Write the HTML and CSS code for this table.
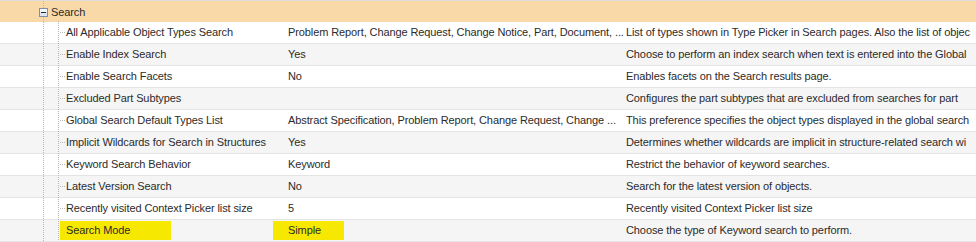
FILE: index.html
```html
<!DOCTYPE html>
<html lang="en">
<head>
    <meta charset="UTF-8">
    <title>Preferences - Search</title>
    <link rel="stylesheet" href="styles.css">
</head>
<body>
    <div class="pref-table">
        <!-- Group header -->
        <div class="group-row">
            <span class="toggle">
                <svg width="9" height="9" viewBox="0 0 9 9">
                    <rect x="0.5" y="0.5" width="8" height="8" fill="#dfe5ee" stroke="#7f8ea8"/>
                    <rect x="1" y="1" width="7" height="3" fill="#f4f6fa"/>
                    <path d="M2 4.5h5" stroke="#1f2a3a" stroke-width="1"/>
                </svg>
            </span>
            <span class="group-name">Search</span>
        </div>

        <div class="pref-row">
            <div class="tree"><span class="guide"></span><span class="guide last"></span></div>
            <div class="cell name"><span class="elbow"></span>All Applicable Object Types Search</div>
            <div class="cell value">Problem Report, Change Request, Change Notice, Part, Document, ...</div>
            <div class="cell desc">List of types shown in Type Picker in Search pages. Also the list of objec</div>
        </div>
        <div class="pref-row">
            <div class="tree"><span class="guide"></span><span class="guide last"></span></div>
            <div class="cell name"><span class="elbow"></span>Enable Index Search</div>
            <div class="cell value">Yes</div>
            <div class="cell desc">Choose to perform an index search when text is entered into the Global</div>
        </div>
        <div class="pref-row">
            <div class="tree"><span class="guide"></span><span class="guide last"></span></div>
            <div class="cell name"><span class="elbow"></span>Enable Search Facets</div>
            <div class="cell value">No</div>
            <div class="cell desc">Enables facets on the Search results page.</div>
        </div>
        <div class="pref-row">
            <div class="tree"><span class="guide"></span><span class="guide last"></span></div>
            <div class="cell name"><span class="elbow"></span>Excluded Part Subtypes</div>
            <div class="cell value"></div>
            <div class="cell desc">Configures the part subtypes that are excluded from searches for part</div>
        </div>
        <div class="pref-row">
            <div class="tree"><span class="guide"></span><span class="guide last"></span></div>
            <div class="cell name"><span class="elbow"></span>Global Search Default Types List</div>
            <div class="cell value">Abstract Specification, Problem Report, Change Request, Change ...</div>
            <div class="cell desc">This preference specifies the object types displayed in the global search</div>
        </div>
        <div class="pref-row">
            <div class="tree"><span class="guide"></span><span class="guide last"></span></div>
            <div class="cell name"><span class="elbow"></span>Implicit Wildcards for Search in Structures</div>
            <div class="cell value">Yes</div>
            <div class="cell desc">Determines whether wildcards are implicit in structure-related search wi</div>
        </div>
        <div class="pref-row">
            <div class="tree"><span class="guide"></span><span class="guide last"></span></div>
            <div class="cell name"><span class="elbow"></span>Keyword Search Behavior</div>
            <div class="cell value">Keyword</div>
            <div class="cell desc">Restrict the behavior of keyword searches.</div>
        </div>
        <div class="pref-row">
            <div class="tree"><span class="guide"></span><span class="guide last"></span></div>
            <div class="cell name"><span class="elbow"></span>Latest Version Search</div>
            <div class="cell value">No</div>
            <div class="cell desc">Search for the latest version of objects.</div>
        </div>
        <div class="pref-row">
            <div class="tree"><span class="guide"></span><span class="guide last"></span></div>
            <div class="cell name"><span class="elbow"></span>Recently visited Context Picker list size</div>
            <div class="cell value">5</div>
            <div class="cell desc">Recently visited Context Picker list size</div>
        </div>
        <div class="pref-row">
            <div class="tree"><span class="guide"></span><span class="guide last"></span></div>
            <div class="cell name"><span class="hl hl-name">Search Mode</span></div>
            <div class="cell value"><span class="hl hl-value">Simple</span></div>
            <div class="cell desc">Choose the type of Keyword search to perform.</div>
        </div>
    </div>
</body>
</html>
```

FILE: styles.css
```css
body {
    margin: 0;
    font-family: 'Liberation Sans', Arial, sans-serif;
    font-size: 11px;
    letter-spacing: -0.1px;
    color: #2b2b2b;
    background: #ffffff;
    overflow: hidden;
}
.pref-table {
    width: 976px;
}
.group-row {
    height: 21px;
    border-top: 1px solid #dedede;
    background: #f9d9a7;
    display: flex;
    align-items: center;
    padding-left: 39px;
    gap: 3px;
    background-image: linear-gradient(#c4b9a6 50%, transparent 50%);
    background-size: 1px 2px;
    background-position: 43px 0;
    background-repeat: repeat-y;
}
.toggle {
    display: flex;
    width: 9px;
    height: 9px;
    margin-top: 1px;
}
.pref-row {
    display: grid;
    grid-template-columns: 60px 213px 338px 1fr;
    height: 21px;
    border-bottom: 1px solid #e4e4e4;
    background: #ffffff;
}
.pref-row:nth-child(odd) {
    background: #f5f5f5;
}
.tree {
    display: flex;
    padding-left: 43px;
}
.guide {
    width: 15px;
    background-image: linear-gradient(#b8b8b8 50%, transparent 50%);
    background-size: 1px 2px;
    background-repeat: repeat-y;
}
.guide.last {
    width: 1px;
    margin-top: -1px;
}
.cell {
    white-space: nowrap;
    line-height: 21px;
}
.name {
    display: flex;
    align-items: center;
}
.elbow {
    width: 5px;
    height: 1px;
    margin-right: 1px;
    background-image: linear-gradient(90deg, #b8b8b8 50%, transparent 50%);
    background-size: 2px 1px;
}
.value {
    padding-left: 15px;
}
.desc {
    padding-left: 15px;
    overflow: hidden;
}
.hl {
    display: inline-block;
    box-sizing: border-box;
    height: 19px;
    line-height: 19px;
    margin-top: 1px;
    vertical-align: top;
    background: #f6e800;
}
.hl-name {
    width: 111px;
    padding-left: 6px;
    align-self: flex-start;
}
.hl-value {
    width: 71px;
    margin-left: -15px;
    padding-left: 15px;
}
```
